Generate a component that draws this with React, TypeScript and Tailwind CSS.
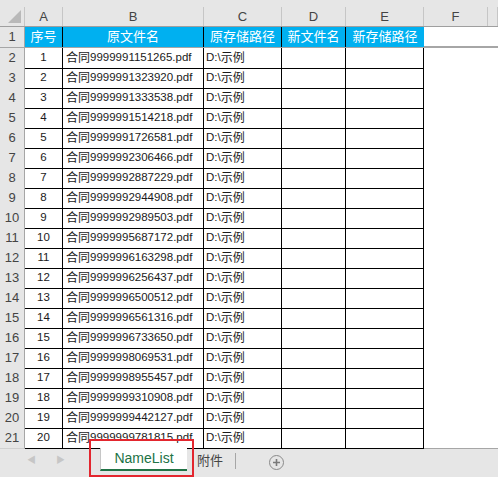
import React from "react";

const rows: [string, string][] = [
  ["1", "9999991151265"],
  ["2", "9999991323920"],
  ["3", "9999991333538"],
  ["4", "9999991514218"],
  ["5", "9999991726581"],
  ["6", "9999992306466"],
  ["7", "9999992887229"],
  ["8", "9999992944908"],
  ["9", "9999992989503"],
  ["10", "9999995687172"],
  ["11", "9999996163298"],
  ["12", "9999996256437"],
  ["13", "9999996500512"],
  ["14", "9999996561316"],
  ["15", "9999996733650"],
  ["16", "9999998069531"],
  ["17", "9999998955457"],
  ["18", "9999999310908"],
  ["19", "9999999442127"],
  ["20", "9999999781815"],
];

const font = { fontFamily: '"Liberation Sans", "Noto Sans CJK SC", sans-serif' };
const cols = "grid grid-cols-[25px_38px_141px_78px_64px_78px_64px_10px]";

const App: React.FC = () => {
  return (
    <div className="relative w-[498px] h-[477px] overflow-hidden bg-white" style={font}>
      {/* top strip */}
      <div className="h-[7px] bg-[#e6e6e6]" />

      {/* column letters */}
      <div className={`${cols} h-[20px] bg-[#e6e6e6] border-b border-[#9f9f9f] text-[13px] text-[#444]`}>
        <div className="relative border-r border-[#c6c6c6]">
          <div className="absolute right-[3px] bottom-[3px] w-0 h-0 border-l-[13px] border-l-transparent border-b-[13px] border-b-[#b9b9b9]" />
        </div>
        {["A", "B", "C", "D", "E", "F", ""].map((c, i) => (
          <div key={i} className="flex items-center justify-center border-r border-[#c6c6c6] leading-none">
            {c}
          </div>
        ))}
      </div>

      {/* header row 1 */}
      <div className={`${cols} h-[21px] border-b-2 border-[#a6a6a6]`}>
        <div className="flex items-center justify-center bg-[#e6e6e6] border-r border-[#a6a6a6] text-[13px] text-[#444]">1</div>
        {["序号", "原文件名", "原存储路径", "新文件名", "新存储路径"].map((h, i) => (
          <div
            key={h}
            className={`flex items-center justify-center bg-[#00b0f0] text-white text-[13px] ${i < 4 ? "border-r border-black" : ""}`}
          >
            {h}
          </div>
        ))}
        <div />
        <div />
      </div>

      {/* data rows */}
      {rows.map(([n, id], idx) => (
        <div key={n} className={`${cols} h-[20px]`}>
          <div className="flex items-center justify-center bg-[#e6e6e6] border-r border-[#a6a6a6] border-b border-b-[#d0d0d0] text-[13px] text-[#444]">
            {idx + 2}
          </div>
          <div className="flex items-center justify-center border-r border-b border-black text-[11.5px] text-[#1a1a1a]">{n}</div>
          <div className="flex items-center pl-[3px] border-r border-b border-black text-[11.5px] text-[#1a1a1a] whitespace-nowrap overflow-hidden">
            <span className="text-[12px]">合同</span>
            {id}.pdf
          </div>
          <div className="flex items-center pl-[2px] border-r border-b border-black text-[11.5px] text-[#1a1a1a] whitespace-nowrap">
            D:\<span className="text-[12px]">示例</span>
          </div>
          <div className="border-r border-b border-black" />
          <div className="border-r border-b border-black" />
          <div />
          <div />
        </div>
      ))}

      {/* sheet tabs */}
      <div className="h-[30px] bg-[#e6e6e6] border-t border-[#a6a6a6] flex items-start">
        <div className="w-[100px] flex items-center gap-[20px] pl-[27px] h-[24px] text-[#c6c6c6] text-[9px]">
          <span>◀</span>
          <span>▶</span>
        </div>
        <div className="w-[87px] h-[23px] -mt-px bg-white border-l border-[#c6c6c6] border-b-2 border-b-[#217346] flex items-center justify-center text-[14px] text-[#217346]">
          NameList
        </div>
        <div className="h-[23px] flex items-center pl-[10px] pr-[12px] text-[13px] text-[#444]">附件</div>
        <div className="mt-[4px] h-[16px] w-px bg-[#a6a6a6]" />
        <div className="ml-[33px] mt-[6px] w-[15px] h-[15px] rounded-full border border-[#8a8a8a] flex items-center justify-center">
          <svg width="9" height="9" viewBox="0 0 9 9">
            <path d="M4.5 1v7M1 4.5h7" stroke="#7a7a7a" strokeWidth="1.6" />
          </svg>
        </div>
      </div>

      {/* red annotation box */}
      <div className="absolute left-[89px] top-[439px] w-[105px] h-[38px] border-2 border-[#e3262e]" />
    </div>
  );
};

export default App;
